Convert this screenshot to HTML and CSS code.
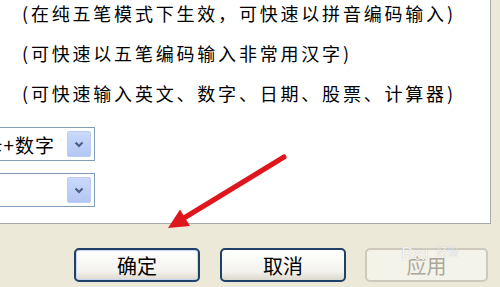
FILE: index.html
```html
<!DOCTYPE html>
<html>
  <head>
    <title>输入法设置</title>
    <link rel="stylesheet" href="styles.css">
  </head>
  <body>
    <div class="panel">
      <div class="notes">
        <p>(在纯五笔模式下生效，可快速以拼音编码输入)</p>
        <p>(可快速以五笔编码输入非常用汉字)</p>
        <p>(可快速输入英文、数字、日期、股票、计算器)</p>
      </div>
      <div class="combo first">
        <span class="combo-text">字母+数字</span>
        <span class="combo-btn">
          <svg width="10" height="7" viewBox="0 0 10 7"><path d="M1.5 1.5 L5 5 L8.5 1.5" fill="none" stroke="#4d6185" stroke-width="2.2"/></svg>
        </span>
      </div>
      <div class="combo">
        <span class="combo-text"></span>
        <span class="combo-btn">
          <svg width="10" height="7" viewBox="0 0 10 7"><path d="M1.5 1.5 L5 5 L8.5 1.5" fill="none" stroke="#4d6185" stroke-width="2.2"/></svg>
        </span>
      </div>
    </div>

    <div class="buttons">
      <button class="btn default">确定</button>
      <button class="btn">取消</button>
      <button class="btn disabled">应用</button>
    </div>

    <!-- red annotation arrow drawn over the dialog -->
    <svg class="arrow" width="500" height="287" viewBox="0 0 500 287">
      <line x1="284" y1="157" x2="184" y2="218" stroke="#e0161d" stroke-width="5" stroke-linecap="round"/>
      <polygon points="168,228 180,209.5 190,226" fill="#e0161d"/>
    </svg>

    <span class="watermark">Bai<span class="small">经验</span></span>
  </body>
</html>
```

FILE: styles.css
```css
body {
  margin: 0;
  width: 500px;
  height: 287px;
  overflow: hidden;
  background-color: #ece9d8;
  font-family: "Noto Sans CJK SC", "Liberation Sans", sans-serif;
  position: relative;
}
.panel {
  width: 491px;
  height: 224px;
  background-color: #fff;
  border-right: 1px solid #a6abac;
  border-bottom: 1px solid #a6abac;
  box-sizing: border-box;
  overflow: hidden;
}
.notes {
  margin-top: -7px;
  padding-left: 22px;
}
.notes p {
  margin: 0;
  height: 40px;
  line-height: 40px;
  font-size: 18px;
  letter-spacing: 2.8px;
  color: #000;
  white-space: nowrap;
}
.combo {
  display: flex;
  align-items: center;
  width: 155px;
  height: 34px;
  margin-left: -60px;
  margin-top: 12px;
  border: 1px solid #7f9db9;
  box-sizing: border-box;
  background: #fff;
}
.combo.first {
  margin-top: 14px;
}
.combo-text {
  flex: 1;
  text-align: right;
  padding-right: 12px;
  font-size: 19px;
  letter-spacing: 1px;
  color: #000;
  white-space: nowrap;
}
.combo-btn {
  display: flex;
  align-items: center;
  justify-content: center;
  width: 24px;
  height: 26px;
  margin-right: 3px;
  border: 1px solid #bccbee;
  border-radius: 2px;
  box-sizing: border-box;
  background: linear-gradient(#cad9fb, #b4c7f4);
}
.buttons {
  display: flex;
  gap: 20px;
  padding: 24px 0 0 74px;
}
.btn {
  width: 126px;
  height: 34px;
  padding: 0;
  font-family: "Noto Sans CJK SC", sans-serif;
  font-size: 20px;
  color: #000;
  border: 2px solid #1f4068;
  border-radius: 5px;
  background: linear-gradient(#ffffff, #f4f3ee 70%, #dcd8cc);
}
.btn.default {
  box-shadow: inset 0 0 0 1px #c8d6f3;
}
.btn.disabled {
  width: 123px;
  margin-left: -1px;
  color: #aca899;
  border-color: #cdcabd;
  background: #f4f3ea;
}
.arrow {
  position: absolute;
  left: 0;
  top: 0;
  pointer-events: none;
}
.watermark {
  position: absolute;
  left: 401px;
  top: 243px;
  font-family: "Liberation Sans", sans-serif;
  font-size: 19px;
  color: rgba(255, 255, 255, 0.85);
  text-shadow: 0 0 1px rgba(0, 0, 0, 0.25);
}
.watermark .small {
  font-family: "Noto Sans CJK SC", sans-serif;
  font-size: 11px;
  margin-left: 8px;
  vertical-align: 4px;
}
```
